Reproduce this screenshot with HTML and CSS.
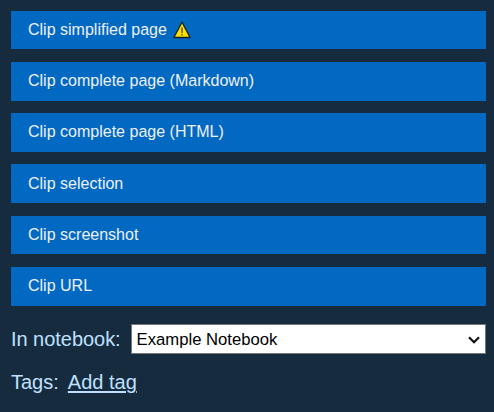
FILE: index.html
```html
<!DOCTYPE html>
<html lang="en">
<head>
<meta charset="utf-8">
<title>Web Clipper</title>
<link rel="stylesheet" href="styles.css">
</head>
<body>
<main class="clipper">
  <div class="actions">
    <button class="action" type="button"><span>Clip simplified page</span><svg class="warning" viewBox="0 0 18 18" aria-hidden="true"><path d="M9 1.2 L17.1 16.5 H.9 Z" fill="#ffe000" stroke="#192124" stroke-width="1.3" stroke-linejoin="round"/><path d="M9 6.5V12M9 13V14.6" stroke="#514500" stroke-width="1.3"/></svg></button>
    <button class="action" type="button">Clip complete page (Markdown)</button>
    <button class="action" type="button">Clip complete page (HTML)</button>
    <button class="action" type="button">Clip selection</button>
    <button class="action" type="button">Clip screenshot</button>
    <button class="action" type="button">Clip URL</button>
  </div>
  <div class="row notebook">
    <label for="notebook">In notebook:</label>
    <div class="select-wrap">
      <select id="notebook" class="select"><option>Example Notebook</option></select>
      <svg class="chevron" viewBox="0 0 12 8" aria-hidden="true"><path d="M1 1.2 L6 6.2 L11 1.2" fill="none" stroke="#101010" stroke-width="2.2"/></svg>
    </div>
  </div>
  <div class="row tags">
    <span>Tags:</span>
    <a class="add-tag" href="#">Add tag</a>
  </div>
</main>
</body>
</html>
```
FILE: styles.css
```css
* {
  box-sizing: border-box;
}

body {
  margin: 0;
  background: #172b3f;
  color: #bfe0ff;
  font-family: "Liberation Sans", Arial, sans-serif;
  font-size: 20px;
}

.clipper {
  padding: 10.5px 8px 0 11px;
}

.actions {
  display: flex;
  flex-direction: column;
  gap: 12.55px;
}

.action {
  display: flex;
  align-items: center;
  height: 38.75px;
  padding: 0 17px 2.1px;
  border: 0;
  background: #0269c2;
  color: #eef0f4;
  font: 16.03px/18px "Liberation Sans", Arial, sans-serif;
}

.warning {
  width: 18px;
  height: 18px;
  margin: 2px 0 0 6px;
}

.row {
  display: flex;
  align-items: center;
  height: 30px;
}

.row label,
.tags {
  padding-top: 2px;
}

.notebook {
  gap: 10px;
  margin-top: 18.25px;
}

.notebook label {
  letter-spacing: -0.04px;
}

.select-wrap {
  position: relative;
  flex: 1;
}

.select {
  display: block;
  width: 100%;
  height: 30px;
  padding: 1px 5px 0;
  appearance: none;
  border: 1px solid #767676;
  border-radius: 0;
  background: #fff;
  color: #000;
  font: 16.67px "Liberation Sans", Arial, sans-serif;
}

.chevron {
  position: absolute;
  top: 12px;
  right: 6px;
  width: 12px;
  height: 8px;
  pointer-events: none;
}

.tags {
  gap: 9px;
  margin-top: 13px;
}

.add-tag {
  color: inherit;
  text-underline-offset: 2px;
  text-decoration-thickness: 2px;
}
```
